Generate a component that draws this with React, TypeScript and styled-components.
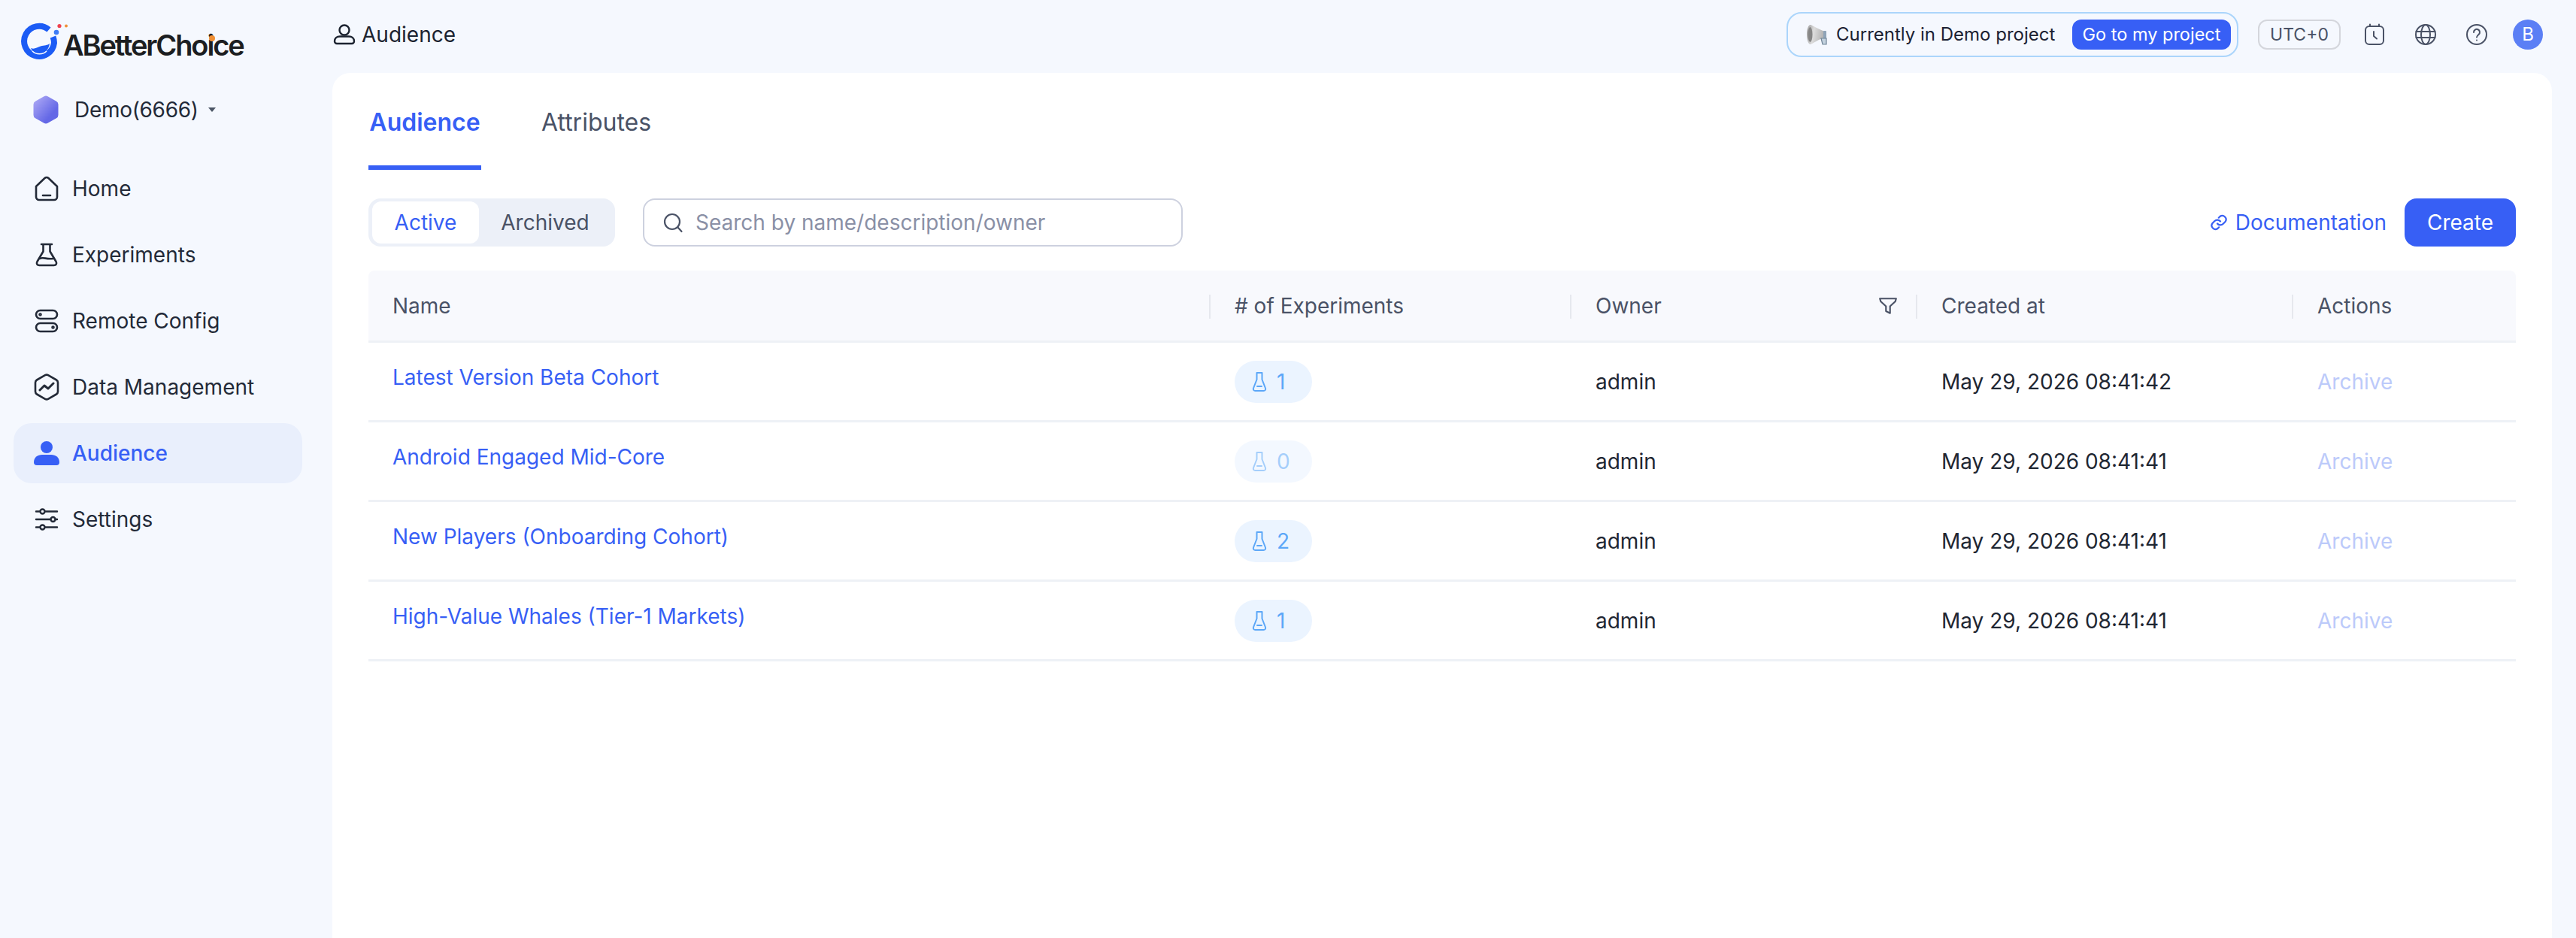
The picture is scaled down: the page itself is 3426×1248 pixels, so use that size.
import styled, { createGlobalStyle } from "styled-components";

const Blue = "#375ff5";

const GlobalStyle = createGlobalStyle`
  html, body {
    margin: 0;
    padding: 0;
    background: #f5f8fe;
  }
  * {
    box-sizing: border-box;
  }
  body {
    font-family: Inter, "Noto Sans", sans-serif;
    font-size: 28px;
    color: #1f2733;
  }
`;

const Page = styled.div`
  display: grid;
  grid-template-columns: 442px 1fr;
  width: 3426px;
  height: 1248px;
  overflow: hidden;
  background: #f5f8fe;
`;

const Sidebar = styled.aside`
  display: flex;
  flex-direction: column;
  padding: 30px 40px 0 18px;
`;

const Brand = styled.div`
  display: flex;
  align-items: flex-end;
  height: 52px;
  margin-left: 10px;
  position: relative;
`;

const BrandName = styled.span`
  font-size: 38px;
  line-height: 52px;
  font-weight: 600;
  letter-spacing: -2.1px;
  color: #1c1e21;
  margin-left: -8px;
  position: relative;
  top: 4px;
`;

const BrandDot = styled.span`
  position: absolute;
  left: 250px;
  top: 17px;
  width: 8px;
  height: 8px;
  border-radius: 50%;
  background: #f08f34;
`;

const ProjectPicker = styled.div`
  display: flex;
  align-items: center;
  height: 38px;
  margin: 45px 0 0 25px;
  font-size: 28px;
  letter-spacing: -0.3px;
  color: #232a38;
`;

const ProjectName = styled.span`
  margin-left: 20px;
`;

const Caret = styled.span`
  width: 0;
  height: 0;
  margin-left: 13px;
  border-left: 5px solid transparent;
  border-right: 5px solid transparent;
  border-top: 6px solid #4b5565;
`;

const Nav = styled.nav`
  display: flex;
  flex-direction: column;
  gap: 8px;
  margin-top: 46px;
`;

const NavItem = styled.div<{ $active?: boolean }>`
  display: flex;
  align-items: center;
  gap: 18px;
  height: 80px;
  padding-left: 28px;
  border-radius: 24px;
  background: ${(p) => (p.$active ? "#e9effc" : "transparent")};
  color: ${(p) => (p.$active ? Blue : "#232a38")};
  font-weight: ${(p) => (p.$active ? 500 : 400)};
`;

const NavIcon = styled.span`
  display: flex;
  justify-content: center;
  width: 32px;
`;

const Main = styled.main`
  display: flex;
  flex-direction: column;
  min-width: 0;
  padding-right: 32px;
`;

const TopBar = styled.header`
  display: flex;
  align-items: center;
  justify-content: space-between;
  height: 97px;
  padding-bottom: 6px;
`;

const Crumb = styled.div`
  display: flex;
  align-items: center;
  gap: 7px;
  color: #1c2330;
`;

const TopActions = styled.div`
  display: flex;
  align-items: center;
  margin-right: -2px;
`;

const Banner = styled.div`
  display: flex;
  align-items: center;
  width: 601px;
  height: 60px;
  padding: 0 8px 0 25px;
  border: 2px solid #abd5fb;
  border-radius: 20px;
  font-size: 24px;
  color: #1c2233;
`;

const BannerText = styled.span`
  margin-left: 10px;
  flex: 1;
  white-space: nowrap;
`;

const BannerButton = styled.button`
  width: 211px;
  height: 40px;
  padding: 0;
  border: 0;
  border-radius: 12px;
  background: ${Blue};
  color: #fff;
  font: 400 23.5px Inter, sans-serif;
`;

const UtcChip = styled.div`
  display: flex;
  align-items: center;
  justify-content: center;
  width: 110px;
  height: 40px;
  margin: 0 11px 0 26px;
  border: 2px solid #d4d6dc;
  border-radius: 12px;
  font-size: 23px;
  color: #4a5266;
`;

const IconGroup = styled.div`
  display: grid;
  grid-template-columns: repeat(4, 68px);
  justify-items: center;
  align-items: center;
  color: #4a5266;
`;

const Avatar = styled.div`
  display: flex;
  align-items: center;
  justify-content: center;
  width: 40px;
  height: 40px;
  border-radius: 50%;
  background: #5b7ff5;
  color: #fff;
  font-size: 24px;
`;

const Panel = styled.section`
  flex: 1;
  padding: 0 48px;
  background: #fff;
  border-radius: 24px 24px 0 0;
`;

const Tabs = styled.div`
  display: flex;
  gap: 80px;
  height: 129px;
`;

const Tab = styled.div<{ $active?: boolean }>`
  display: flex;
  align-items: center;
  justify-content: center;
  min-width: ${(p) => (p.$active ? "150px" : "auto")};
  padding-top: 8px;
  font-size: 32px;
  font-weight: ${(p) => (p.$active ? 600 : 400)};
  color: ${(p) => (p.$active ? Blue : "#4a5266")};
  border-bottom: 6px solid ${(p) => (p.$active ? Blue : "transparent")};
`;

const Toolbar = styled.div`
  display: flex;
  align-items: center;
  height: 64px;
  margin: 38px 0 32px;
`;

const Segment = styled.div`
  display: flex;
  width: 328px;
  height: 64px;
  padding: 4px 5px;
  border-radius: 16px;
  background: #ecf0f8;
`;

const SegmentOption = styled.div<{ $active?: boolean }>`
  display: flex;
  align-items: center;
  justify-content: center;
  width: ${(p) => (p.$active ? 142 : 176)}px;
  border-radius: 12px;
  background: ${(p) => (p.$active ? "#fff" : "transparent")};
  color: ${(p) => (p.$active ? Blue : "#4a5266")};
`;

const SearchBox = styled.div`
  display: flex;
  align-items: center;
  gap: 16px;
  width: 718px;
  height: 64px;
  margin-left: 37px;
  padding-left: 24px;
  border: 2px solid #cdd1df;
  border-radius: 16px;
  color: #8a90a6;
`;

const Spacer = styled.div`
  flex: 1;
`;

const DocLink = styled.a`
  display: flex;
  align-items: center;
  gap: 10px;
  margin-right: 24px;
  color: ${Blue};
`;

const CreateButton = styled.button`
  width: 148px;
  height: 64px;
  padding: 0;
  border: 0;
  border-radius: 16px;
  background: ${Blue};
  color: #fff;
  font: 400 28px Inter, sans-serif;
`;

const columns = "1120px 480px 460px 500px 296px";

const HeadRow = styled.div`
  display: grid;
  grid-template-columns: ${columns};
  height: 96px;
  background: #f8f9fd;
  border-bottom: 3px solid #eef1f6;
  border-radius: 8px 8px 0 0;
  color: #4a5266;
`;

const HeadCell = styled.div<{ $first?: boolean }>`
  position: relative;
  display: flex;
  align-items: center;
  justify-content: space-between;
  padding: 0 26px 0 32px;

  &::before {
    content: "";
    display: ${(p) => (p.$first ? "none" : "block")};
    position: absolute;
    left: -2px;
    top: 32px;
    width: 2px;
    height: 32px;
    background: #e6e8ee;
  }
`;

const Row = styled.div`
  display: grid;
  grid-template-columns: ${columns};
  height: 106px;
  border-bottom: 3px solid #eef1f6;
`;

const Cell = styled.div`
  display: flex;
  align-items: center;
  padding-left: 32px;
`;

const NameCell = styled(Cell)`
  padding-bottom: 12px;
`;

const NameLink = styled.a`
  color: ${Blue};
`;

const CountPill = styled.div<{ $empty?: boolean }>`
  display: flex;
  align-items: center;
  gap: 10px;
  width: 103px;
  height: 56px;
  padding-left: 20px;
  border-radius: 28px;
  background: #ebf4ff;
  color: #5ca7f8;
  opacity: ${(p) => (p.$empty ? 0.55 : 1)};
`;

const ArchiveAction = styled.span`
  color: #bccafa;
`;

const Stroke = styled.svg`
  flex: none;
  display: block;
  fill: none;
  stroke: currentColor;
  stroke-linecap: round;
  stroke-linejoin: round;
`;

const Logo = () => (
  <svg width="64" height="52" viewBox="0 0 64 52" style={{ flex: "none" }}>
    <path
      d="M37 9.500A20 20 0 1 0 44 27c0-3-.6-5.600-1.500-8"
      fill="none"
      stroke="#1c5cf5"
      strokeWidth="8"
    />
    <path d="M13 34c5 2 8-1 13-2.500 5-1.500 9-1 12-3.500-1 8-7 14-14 14-5 0-9-3-11-8z" fill="#1c5cf5" />
    <path d="M15 38c5 5 14 5 19 0" fill="none" stroke="#fff" strokeWidth="1.500" />
    <circle cx="47" cy="13" r="3.300" fill="#3f7cf6" />
    <circle cx="51" cy="4.500" r="2.600" fill="#ef4150" />
    <circle cx="60" cy="4.500" r="2" fill="#f08f34" />
  </svg>
);

const ProjectHex = () => (
  <svg width="36" height="38" viewBox="0 0 36 38" style={{ flex: "none" }}>
    <defs>
      <linearGradient id="hex" x1="0.1" y1="0.1" x2="0.7" y2="0.7">
        <stop offset="0" stopColor="#a8a4f4" />
        <stop offset="1" stopColor="#6468e6" />
      </linearGradient>
    </defs>
    <path
      d="M15.500 1.200a5 5 0 0 1 5 0l11.500 6.600a5 5 0 0 1 2.500 4.300v13.800a5 5 0 0 1-2.500 4.300l-11.500 6.600a5 5 0 0 1-5 0L4 30.200a5 5 0 0 1-2.500-4.300V12.100A5 5 0 0 1 4 7.800z"
      fill="url(#hex)"
    />
  </svg>
);

const HomeIcon = () => (
  <Stroke width="32" height="34" viewBox="0 0 32 34" strokeWidth="2.600">
    <path d="M2 14 13.500 3a3.600 3.600 0 0 1 5 0L30 14v14a4 4 0 0 1-4 4H6a4 4 0 0 1-4-4z" />
    <path d="M11 26h10" />
  </Stroke>
);

const FlaskIcon = ({ size = 32 }: { size?: number }) => (
  <Stroke width={size} height={size} viewBox="0 0 32 32" strokeWidth="2.600">
    <path d="M9 2h14M11.500 2v9.500L3.500 25c-1.500 2.800 0 5 2.800 5h19.400c2.800 0 4.300-2.200 2.800-5l-8-13.500V2" />
    <path d="M7 21c5-2.500 8 1.500 18 0" />
  </Stroke>
);

const SmallFlask = () => (
  <Stroke width="26" height="28" viewBox="0 0 26 28" strokeWidth="2">
    <path d="M9.500 2h7v9l4.500 11.500c.6 2-.5 3.500-2.500 3.500h-11c-2 0-3.100-1.500-2.500-3.500L9.500 11z" />
    <path d="M10 20h6" />
  </Stroke>
);

const ConfigIcon = () => (
  <Stroke width="32" height="32" viewBox="0 0 32 32" strokeWidth="2.600">
    <rect x="2" y="2" width="28" height="11" rx="5.500" />
    <rect x="2" y="19" width="28" height="11" rx="5.500" />
    <circle cx="7.500" cy="7.500" r="1" />
    <circle cx="24.500" cy="24.500" r="1" />
  </Stroke>
);

const DataIcon = () => (
  <Stroke width="34" height="36" viewBox="0 0 34 36" strokeWidth="2.600">
    <path d="M15 2.200a4 4 0 0 1 4 0l11 6.300a4 4 0 0 1 2 3.500v12a4 4 0 0 1-2 3.500l-11 6.300a4 4 0 0 1-4 0L4 27.500A4 4 0 0 1 2 24V12a4 4 0 0 1 2-3.500z" />
    <path d="M8 22l6-6 5 4 7-7" strokeWidth="3" />
  </Stroke>
);

const PersonIcon = () => (
  <svg width="34" height="32" viewBox="0 0 34 32" fill={Blue} style={{ flex: "none" }}>
    <circle cx="17" cy="8" r="8" />
    <path d="M0 28c0-6.500 5-10 11-10h12c6 0 11 3.500 11 10a4 4 0 0 1-4 4H4a4 4 0 0 1-4-4z" />
  </svg>
);

const SlidersIcon = () => (
  <Stroke width="32" height="30" viewBox="0 0 32 30" strokeWidth="2.400">
    <path d="M2 4.500h5M14 4.500h16M2 15h19M28 15h2M2 25.500h5M14 25.500h16" />
    <circle cx="10.500" cy="4.500" r="3" />
    <circle cx="24.500" cy="15" r="3" />
    <circle cx="10.500" cy="25.500" r="3" />
  </Stroke>
);

const UserOutline = () => (
  <Stroke width="32" height="32" viewBox="0 0 32 32" strokeWidth="2.400">
    <circle cx="16" cy="10" r="6.500" />
    <path d="M3 25c0-4 3-6.500 7-6.500h12c4 0 7 2.500 7 6.500a3 3 0 0 1-3 3H6a3 3 0 0 1-3-3z" />
  </Stroke>
);

const Megaphone = () => (
  <svg width="29" height="28" viewBox="0 0 29 28" style={{ flex: "none" }}>
    <defs>
      <linearGradient id="horn" x1="0" y1="0" x2="1" y2="0.2">
        <stop offset="0" stopColor="#9a9a9a" />
        <stop offset="0.45" stopColor="#dcdcdc" />
        <stop offset="1" stopColor="#b4b4b4" />
      </linearGradient>
    </defs>
    <path d="M5 1c3 1 11 6 18 8.500v9C16 20 8 26 5 27 2 27 0 21 0 14S2 1 5 1z" fill="url(#horn)" />
    <ellipse cx="4.500" cy="14" rx="3" ry="10" fill="#858585" />
    <rect x="22" y="9" width="4" height="11" rx="1" fill="#8fa4b8" />
    <path d="M19 19h7v8h-5z" fill="#c3d2de" stroke="#6f8396" strokeWidth="1.200" />
  </svg>
);

const ClockCalendar = () => (
  <Stroke width="28" height="30" viewBox="0 0 28 30" strokeWidth="2">
    <rect x="2" y="4" width="24" height="24" rx="5" />
    <path d="M8 1.500V4M20 1.500V4M13 11v6l4 3.500" />
  </Stroke>
);

const GlobeIcon = () => (
  <Stroke width="30" height="30" viewBox="0 0 30 30" strokeWidth="2">
    <circle cx="15" cy="15" r="13" />
    <ellipse cx="15" cy="15" rx="6" ry="13" />
    <path d="M2.500 11h25M2.500 19h25" />
  </Stroke>
);

const HelpIcon = () => (
  <Stroke width="30" height="30" viewBox="0 0 30 30" strokeWidth="2">
    <circle cx="15" cy="15" r="13" />
    <path d="M11 12a4 4 0 1 1 6.500 3c-1.500 1.200-2.500 2-2.500 3.500" />
    <path d="M15 22.500v.1" />
  </Stroke>
);

const SearchIcon = () => (
  <Stroke width="28" height="28" viewBox="0 0 28 28" strokeWidth="2.200" color="#4a5266">
    <circle cx="13" cy="13" r="10" />
    <path d="M20.500 20.500 25.500 26" />
  </Stroke>
);

const LinkIcon = () => (
  <Stroke width="24" height="24" viewBox="0 0 24 24" strokeWidth="2.200">
    <path d="M10 13.500a5 5 0 0 0 7.500.5l3-3a5 5 0 0 0-7-7l-1.700 1.700" />
    <path d="M14 10.500a5 5 0 0 0-7.500-.5l-3 3a5 5 0 0 0 7 7l1.700-1.700" />
  </Stroke>
);

const FilterIcon = () => (
  <Stroke width="26" height="26" viewBox="0 0 24 24" strokeWidth="2">
    <path d="M2 3h20l-1 3.500-6.500 6V21l-5-2.500v-6L3 6.500z" />
  </Stroke>
);

const navItems = [
  { label: "Home", icon: <HomeIcon /> },
  { label: "Experiments", icon: <FlaskIcon /> },
  { label: "Remote Config", icon: <ConfigIcon /> },
  { label: "Data Management", icon: <DataIcon /> },
  { label: "Audience", icon: <PersonIcon />, active: true },
  { label: "Settings", icon: <SlidersIcon /> },
];

const cohorts = [
  { name: "Latest Version Beta Cohort", count: 1, created: "May 29, 2026 08:41:42" },
  { name: "Android Engaged Mid-Core", count: 0, created: "May 29, 2026 08:41:41" },
  { name: "New Players (Onboarding Cohort)", count: 2, created: "May 29, 2026 08:41:41" },
  { name: "High-Value Whales (Tier-1 Markets)", count: 1, created: "May 29, 2026 08:41:41" },
];

const App = () => {
  return (
    <Page>
      <GlobalStyle />
      <Sidebar>
        <Brand>
          <Logo />
          <BrandName>ABetterChoice</BrandName>
          <BrandDot />
        </Brand>
        <ProjectPicker>
          <ProjectHex />
          <ProjectName>Demo(6666)</ProjectName>
          <Caret />
        </ProjectPicker>
        <Nav>
          {navItems.map((item) => (
            <NavItem key={item.label} $active={item.active}>
              <NavIcon>{item.icon}</NavIcon>
              {item.label}
            </NavItem>
          ))}
        </Nav>
      </Sidebar>
      <Main>
        <TopBar>
          <Crumb>
            <UserOutline />
            Audience
          </Crumb>
          <TopActions>
            <Banner>
              <Megaphone />
              <BannerText>Currently in Demo project</BannerText>
              <BannerButton>Go to my project</BannerButton>
            </Banner>
            <UtcChip>UTC+0</UtcChip>
            <IconGroup>
              <ClockCalendar />
              <GlobeIcon />
              <HelpIcon />
              <Avatar>B</Avatar>
            </IconGroup>
          </TopActions>
        </TopBar>
        <Panel>
          <Tabs>
            <Tab $active>Audience</Tab>
            <Tab>Attributes</Tab>
          </Tabs>
          <Toolbar>
            <Segment>
              <SegmentOption $active>Active</SegmentOption>
              <SegmentOption>Archived</SegmentOption>
            </Segment>
            <SearchBox>
              <SearchIcon />
              Search by name/description/owner
            </SearchBox>
            <Spacer />
            <DocLink>
              <LinkIcon />
              Documentation
            </DocLink>
            <CreateButton>Create</CreateButton>
          </Toolbar>
          <HeadRow>
            <HeadCell $first>Name</HeadCell>
            <HeadCell># of Experiments</HeadCell>
            <HeadCell>
              Owner
              <FilterIcon />
            </HeadCell>
            <HeadCell>Created at</HeadCell>
            <HeadCell>Actions</HeadCell>
          </HeadRow>
          {cohorts.map((c) => (
            <Row key={c.name}>
              <NameCell>
                <NameLink>{c.name}</NameLink>
              </NameCell>
              <Cell>
                <CountPill $empty={c.count === 0}>
                  <SmallFlask />
                  {c.count}
                </CountPill>
              </Cell>
              <Cell>admin</Cell>
              <Cell>{c.created}</Cell>
              <Cell>
                <ArchiveAction>Archive</ArchiveAction>
              </Cell>
            </Row>
          ))}
        </Panel>
      </Main>
    </Page>
  );
};

export default App;
